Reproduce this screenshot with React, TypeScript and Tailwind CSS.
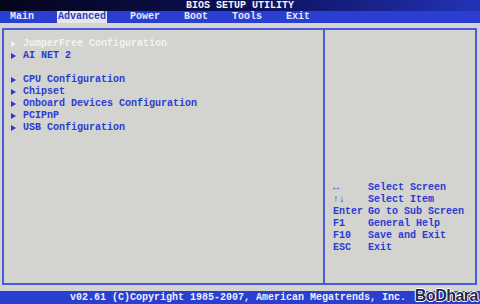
import React from "react"

const menus = ["Main", "Advanced", "Power", "Boot", "Tools", "Exit"]

const items: (string | null)[] = [
  "JumperFree Configuration",
  "AI NET 2",
  null,
  "CPU Configuration",
  "Chipset",
  "Onboard Devices Configuration",
  "PCIPnP",
  "USB Configuration",
]

const help = [
  ["↔", "Select Screen"],
  ["↑↓", "Select Item"],
  ["Enter", "Go to Sub Screen"],
  ["F1", "General Help"],
  ["F10", "Save and Exit"],
  ["ESC", "Exit"],
]

function Arrow({ light }: { light?: boolean }) {
  return (
    <svg width="5" height="6" viewBox="0 0 5 6" className="shrink-0">
      <polygon points="0,0 5,3 0,6" fill={light ? "#f2f2f2" : "#2b3bd4"} />
    </svg>
  )
}

export default function App() {
  return (
    <div className="w-[480px] h-[304px] flex flex-col bg-[#d3d3cf] font-['Liberation_Mono',monospace] font-bold text-[10px] leading-[12px] overflow-hidden">
      {/* title */}
      <div className="h-[11px] shrink-0 flex items-center justify-center bg-gradient-to-r from-[#05051c] via-[#0c0f55] to-[#2233b8] text-[#f4f4f4] leading-[11px]">
        BIOS SETUP UTILITY
      </div>

      {/* menu bar */}
      <div className="h-[12px] shrink-0 flex items-center gap-[24px] pl-[10px] bg-[#2a3fd2] text-[#e8e8f4]">
        {menus.map((m) => (
          <span
            key={m}
            className={
              m === "Advanced"
                ? "bg-[#e6e6e2] text-[#2b3bd4] px-[1px] h-[12px] -ml-[1px] -mr-[1px]"
                : ""
            }
          >
            {m}
          </span>
        ))}
      </div>

      {/* body */}
      <div className="flex-1 pt-[5px] pl-[2px] pr-[3px] pb-[6px] flex">
        <div className="flex-1 flex border-2 border-[#4a5ad8]">
          <div className="w-[321px] flex flex-col pt-[8px] pl-[7px] border-r-2 border-[#4a5ad8]">
            {items.map((it, i) =>
              it ? (
                <div key={i} className="flex items-center gap-[7px] h-[12px]">
                  <Arrow light={i === 0} />
                  <span className={i === 0 ? "text-[#f2f2f2]" : "text-[#2b3bd4]"}>{it}</span>
                </div>
              ) : (
                <div key={i} className="h-[12px]" />
              )
            )}
          </div>
          <div className="flex-1 flex flex-col justify-end pb-[29px] pl-[8px] text-[#2b3bd4]">
            {help.map(([k, d]) => (
              <div key={k} className="flex h-[12px]">
                <span className="w-[35px] shrink-0">{k}</span>
                <span>{d}</span>
              </div>
            ))}
          </div>
        </div>
      </div>

      {/* footer */}
      <div className="h-[13px] shrink-0 flex items-center bg-[#2a3fd2] text-[#eeeef8] leading-[13px]">
        <span className="ml-[70px]">v02.61 (C)Copyright 1985-2007, American Megatrends, Inc.</span>
        <span className="ml-auto mr-[2px] -mt-[3px] font-['Liberation_Sans',sans-serif] text-[16px] leading-[16px] font-black tracking-[-0.5px] text-[#222a4c] [text-shadow:1px_0_0_#fff,-1px_0_0_#fff,0_1px_0_#fff,0_-1px_0_#fff]">
          BoDhara
        </span>
      </div>
    </div>
  )
}
